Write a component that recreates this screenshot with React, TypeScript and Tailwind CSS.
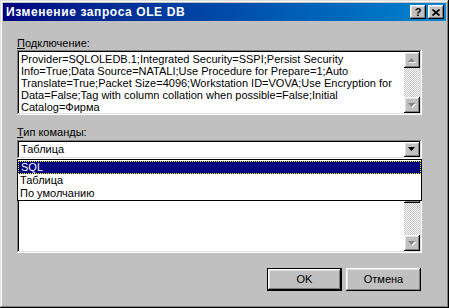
const raised =
  "shadow-[inset_-1px_-1px_#000,inset_1px_1px_#fff,inset_-2px_-2px_#808080,inset_2px_2px_#dfdfdf]"
const sunken =
  "shadow-[inset_-1px_-1px_#fff,inset_1px_1px_#808080,inset_-2px_-2px_#dfdfdf,inset_2px_2px_#000]"

const connection = [
  "Provider=SQLOLEDB.1;Integrated Security=SSPI;Persist Security",
  "Info=True;Data Source=NATALI;Use Procedure for Prepare=1;Auto",
  "Translate=True;Packet Size=4096;Workstation ID=VOVA;Use Encryption for",
  "Data=False;Tag with column collation when possible=False;Initial",
  "Catalog=Фирма",
]

const options = ["SQL", "Таблица", "По умолчанию"]

function Arrow({ down, dim }: { down?: boolean; dim?: boolean }) {
  const pts = down ? "0,0 7,0 3.5,4" : "3.5,0 7,4 0,4"
  return (
    <svg width="8" height="5" viewBox="0 0 8 5" className="block">
      {dim && <polygon points={pts} fill="#fff" transform="translate(1,1)" />}
      <polygon points={pts} fill={dim ? "#808080" : "#000"} />
    </svg>
  )
}

function ScrollBar() {
  return (
    <div className="flex flex-col w-[16px] h-full">
      <div className={`w-[16px] h-[16px] bg-[#c0c0c0] flex items-center justify-center ${raised}`}>
        <Arrow dim />
      </div>
      <div className="flex-1 bg-[repeating-conic-gradient(#c0c0c0_0_25%,#fff_0_50%)] bg-[length:2px_2px]" />
      <div className={`w-[16px] h-[16px] bg-[#c0c0c0] flex items-center justify-center ${raised}`}>
        <Arrow down dim />
      </div>
    </div>
  )
}

function Button({ label, primary }: { label: string; primary?: boolean }) {
  return (
    <div className={`w-[75px] h-[23px] ${primary ? "border border-black" : ""}`}>
      <div className={`w-full h-full bg-[#c0c0c0] flex items-center justify-center ${raised}`}>
        {label}
      </div>
    </div>
  )
}

export default function App() {
  return (
    <div
      className={`w-[449px] h-[308px] bg-[#c0c0c0] p-[3px] flex flex-col text-[11px] leading-[13px] text-black shadow-[inset_-1px_-1px_#000,inset_1px_1px_#dfdfdf,inset_-2px_-2px_#808080,inset_2px_2px_#fff]`}
      style={{ fontFamily: '"Liberation Sans", Arial, sans-serif' }}
    >
      {/* title bar */}
      <div className="h-[18px] flex items-center bg-linear-to-r from-[#000080] to-[#1084d0] pl-[3px] pr-[2px]">
        <span className="text-white font-bold text-[12px] tracking-[0.6px] flex-1">Изменение запроса OLE DB</span>
        <div className={`w-[16px] h-[14px] bg-[#c0c0c0] flex items-center justify-center font-bold text-[11px] ${raised}`}>
          ?
        </div>
        <div className={`ml-[2px] w-[16px] h-[14px] bg-[#c0c0c0] flex items-center justify-center ${raised}`}>
          <svg width="8" height="7" viewBox="0 0 8 7">
            <path d="M0.5 0.5 L7.5 6.5 M7.5 0.5 L0.5 6.5" stroke="#000" strokeWidth="1.6" />
          </svg>
        </div>
      </div>

      <div className="pl-[14px] flex flex-col">
        <div className="mt-[16px] h-[13px]">
          <span className="underline">П</span>одключение:
        </div>
        <div className={`w-[405px] h-[65px] bg-white p-[2px] flex ${sunken}`}>
          <div className="flex-1 pl-[2px] pt-[1px] leading-[12px] overflow-hidden">
            {connection.map((line) => (
              <div key={line} className="whitespace-nowrap">
                {line}
              </div>
            ))}
          </div>
          <ScrollBar />
        </div>

        <div className="mt-[11px] h-[13px]">
          <span className="underline">Т</span>ип команды:
        </div>
        <div className="relative mt-[1px]">
          <div className={`w-[405px] h-[19px] bg-white p-[2px] flex items-center ${sunken}`}>
            <div className="flex-1 pl-[2px]">Таблица</div>
            <div className={`w-[16px] h-[15px] bg-[#c0c0c0] flex items-center justify-center ${raised}`}>
              <Arrow down />
            </div>
          </div>

          {/* open list */}
          <div className="absolute z-10 left-0 top-[19px] w-[405px] h-[42px] bg-white border border-black">
            {options.map((o, i) => (
              <div
                key={o}
                className={`h-[13px] pl-[2px] ${i === 0 ? "mt-[1px] bg-[#000080] text-white border border-dotted border-[#ffff00] leading-[11px]" : ""}`}
              >
                {o}
              </div>
            ))}
          </div>
        </div>

        <div className={`mt-[26px] w-[405px] h-[68px] bg-white p-[2px] flex justify-end ${sunken}`}>
          <ScrollBar />
        </div>

        <div className="mt-[15px] w-[405px] flex justify-end gap-[4px] pr-[1px]">
          <Button label="OK" primary />
          <Button label="Отмена" />
        </div>
      </div>
    </div>
  )
}
